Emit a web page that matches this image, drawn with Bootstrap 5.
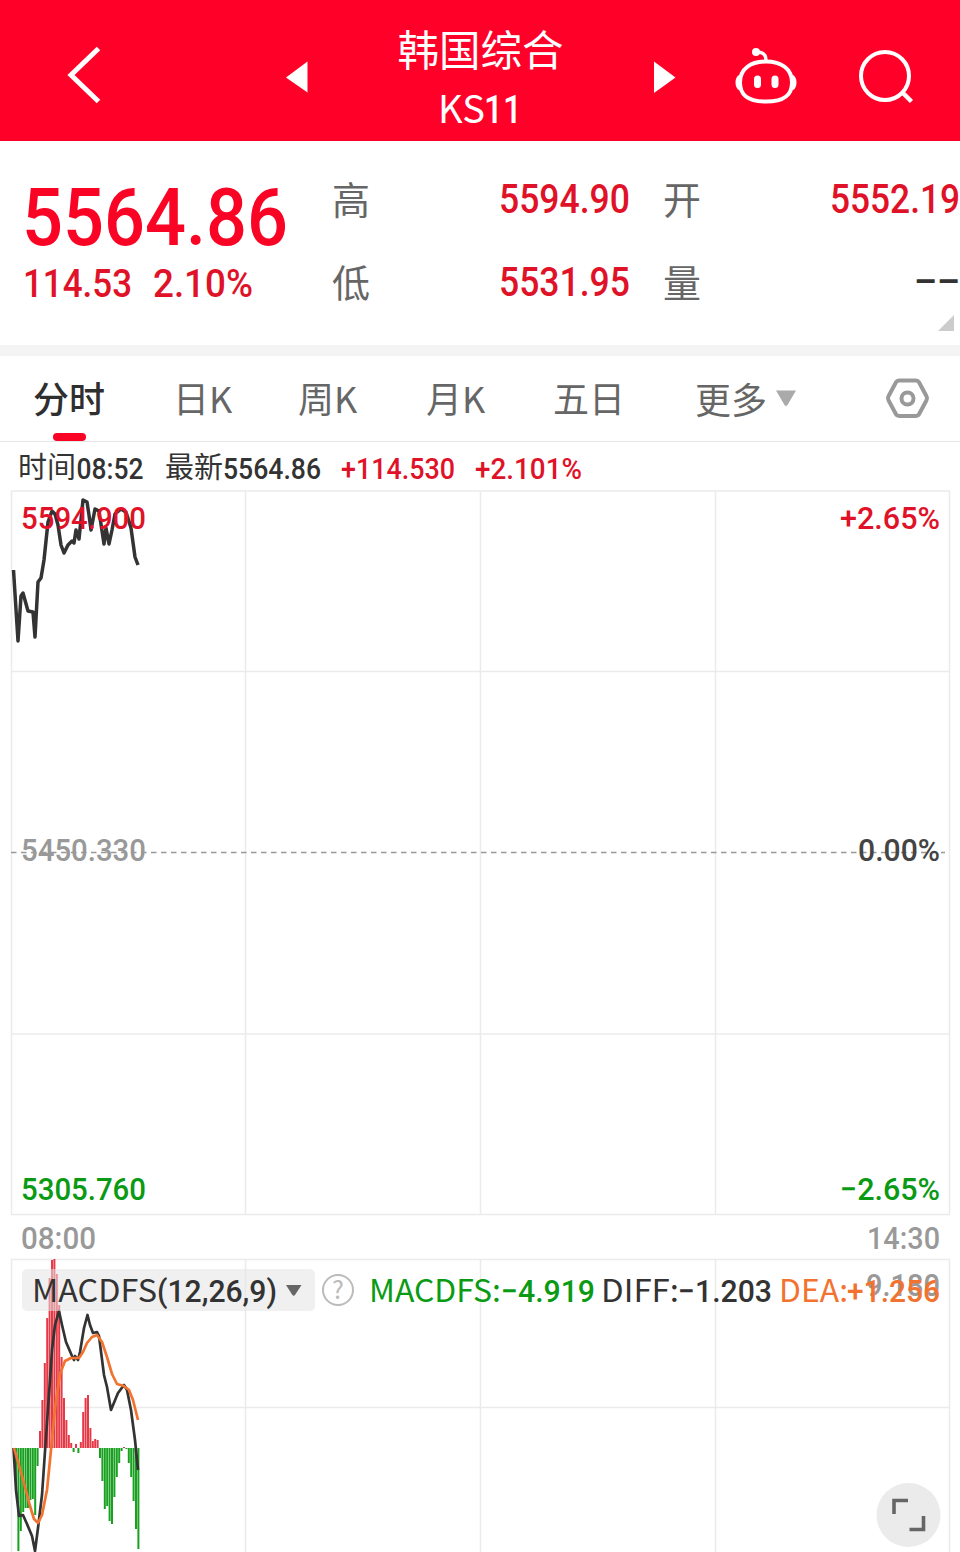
<!DOCTYPE html>
<html lang="zh-CN">
<head>
<meta charset="utf-8">
<meta name="viewport" content="width=device-width, initial-scale=1">
<title>韩国综合 KS11</title>
<link rel="stylesheet" href="https://cdn.jsdelivr.net/npm/bootstrap@5.3.0/dist/css/bootstrap.min.css">
<style>
body{width:960px;height:1552px;overflow:hidden;background:#fff;color:#333;font-family:"Noto Sans CJK SC",sans-serif}
svg{display:block;flex:none;overflow:visible}
.topbar{height:141px;background:#ff0029;color:#fff}
.stock-title{width:345px;line-height:58px;font-size:41.5px;padding-top:19px}
.stock-code{font-size:38px;line-height:60px}
.quote{height:204px;padding:15px 0 0 23px}
.price-col{width:309px;padding-top:20px}
.fig{font-family:Roboto,sans-serif;font-weight:460;white-space:nowrap}
.price .fig{font-weight:540}
.stats{display:grid;grid-template-columns:297px 297px;column-gap:34px;grid-auto-rows:83px;font-size:38px;color:#666}
.divider{height:11px;background:#f4f4f4}
.tabs{height:86px;border-bottom:1px solid #e6e6e6;padding-left:33px;font-size:36px;line-height:83px;color:#666}
.tab-on{color:#2f2f2f;font-weight:500}
.tab-on::after{content:"";position:absolute;left:20px;bottom:0;width:33px;height:8px;border-radius:4px;background:#f90424}
.info{height:48px}
</style>
</head>
<body>
<header class="topbar d-flex">
  <svg width="308" height="141" fill="none"><path d="M98.500 48.500 71 75l27.500 26.500" stroke="#fff" stroke-width="5"/><path d="M286 77.500 307.500 61.500v31z" fill="#fff"/></svg>
  <div class="stock-title text-center">韩国综合<div class="stock-code"><svg class="mx-auto" width="84" height="60"><text x="-1" y="46" fill="#fff" font-size="38" textLength="47" lengthAdjust="spacingAndGlyphs">KS</text><text x="45" y="46" fill="#fff" class="fig" font-size="39" textLength="38" lengthAdjust="spacingAndGlyphs">11</text></svg></div></div>
  <svg width="307" height="141" viewBox="653 0 307 141" fill="none" stroke="#fff">
    <path d="M654 61.500 675.500 77.500 654 93z" fill="#fff" stroke="none"/>
    <path d="M766 61.500c-15 0-26 7-26 21 0 12 7 19 26 19s26-7 26-19c0-14-11-21-26-21z" stroke-width="4"/>
    <path d="M766 61c0-6-2-9-9-9" stroke-width="3.500"/>
    <circle cx="756" cy="52" r="4" fill="#fff" stroke="none"/>
    <path d="M740 76c-4 2-4 11 0 13M792 76c4 2 4 11 0 13" stroke-width="3" fill="#fff"/>
    <path d="M757.500 79v5.500M775 79v5.500" stroke-width="7" stroke-linecap="round"/>
    <circle cx="885" cy="76" r="24" stroke-width="4"/><path d="m902 92 9.500 9.500" stroke-width="4.500"/>
  </svg>
</header>
<section class="quote d-flex position-relative">
  <div class="price-col">
    <svg class="price" width="270" height="80"><text class="fig" x="-1" y="69" font-size="80" fill="#f90424" textLength="266" lengthAdjust="spacingAndGlyphs">5564.86</text></svg>
    <svg width="270" height="54"><g class="fig" font-size="39.500" fill="#e01228"><text x="0" y="41" textLength="109" lengthAdjust="spacingAndGlyphs">114.53</text><text x="130" y="41" textLength="100" lengthAdjust="spacingAndGlyphs">2.10%</text></g></svg>
  </div>
  <div class="stats">
    <div class="d-flex align-items-center justify-content-between">高<svg width="130" height="60"><text class="fig" x="0" y="44.500" font-size="40" fill="#e01228" textLength="131" lengthAdjust="spacingAndGlyphs">5594.90</text></svg></div>
    <div class="d-flex align-items-center justify-content-between">开<svg width="130" height="60"><text class="fig" x="0" y="44.500" font-size="40" fill="#e01228" textLength="130" lengthAdjust="spacingAndGlyphs">5552.19</text></svg></div>
    <div class="d-flex align-items-center justify-content-between">低<svg width="130" height="60"><text class="fig" x="0" y="44.500" font-size="40" fill="#e01228" textLength="131" lengthAdjust="spacingAndGlyphs">5531.95</text></svg></div>
    <div class="d-flex align-items-center justify-content-between">量<svg width="46" height="60"><text class="fig" x="0" y="44" font-size="40" fill="#333" textLength="46" lengthAdjust="spacingAndGlyphs">––</text></svg></div>
  </div>
  <svg class="position-absolute end-0 bottom-0" width="22" height="30"><path d="M0 16 16 0v16z" fill="#ccc"/></svg>
</section>
<div class="divider"></div>
<nav class="tabs d-flex">
  <div class="tab-on position-relative" style="width:140px">分时</div>
  <div style="width:125px">日K</div>
  <div style="width:128px">周K</div>
  <div style="width:127px">月K</div>
  <div style="width:142px">五日</div>
  <div class="d-flex align-items-center" style="width:191px">更多<svg class="ms-2" width="22" height="20"><path d="M1 1.500h20L12.500 16q-1.500 2-3 0z" fill="#aaa"/></svg></div>
  <svg width="44" height="85" fill="none" stroke="#999" stroke-width="4"><path d="M13 24.500H30q2 0 3 1.700l7.500 14q1.200 2 0 4l-7.500 14q-1 1.800-3 1.800H13q-2 0-3-1.800l-7.500-14q-1.200-2 0-4l7.500-14q1-1.700 3-1.700z"/><circle cx="21.500" cy="42.500" r="6"/></svg>
</nav>
<div class="info">
  <svg width="960" height="48" viewBox="0 442 960 48" font-size="29" fill="#333">
    <text x="18" y="478">时间</text><text x="165" y="478">最新</text>
    <g class="fig" font-size="29.500"><text x="76.500" y="479" textLength="67" lengthAdjust="spacingAndGlyphs">08:52</text><text x="223" y="479" textLength="98" lengthAdjust="spacingAndGlyphs">5564.86</text>
    <g fill="#e01228"><text x="341" y="479" textLength="114" lengthAdjust="spacingAndGlyphs">+114.530</text><text x="475" y="479" textLength="107" lengthAdjust="spacingAndGlyphs">+2.101%</text></g></g>
  </svg>
</div>
<main class="position-relative">
<svg width="960" height="1062" viewBox="0 490 960 1062" fill="none">
  <path d="M11 491H950M11 671.500H950M11 1034H950M11 1214.500H950M11.500 491V1214.500M245.500 491V1214.500M480.500 491V1214.500M715.500 491V1214.500M949.500 491V1214.500M11 1259.500H950M11 1407.500H950M11.500 1259V1552M245.500 1259V1552M480.500 1259V1552M715.500 1259V1552M949.500 1259V1552" stroke="#ebebeb" stroke-width="1.500"/>
  <path d="M11 852.500H945" stroke="#999" stroke-width="1.500" stroke-dasharray="5.500 4.500"/>
  <polyline points="13.500,570 18,641 21,596 23,593 28,611 33,612 35,637 38,582 41,578 44,560 48,522 52,511 55,514 58,525 61,545 64,553 68,545 72,541 74,543 76,530 79,539 83,500 87,502 89,515 91,530 95,509 99,511 104,544 106,528 109,544 112,530 115,514 121,509 126,512 131,528 135,557 138,565" stroke="#333" stroke-width="3.500" stroke-linejoin="round"/>
  <g class="fig" font-size="31.500">
    <text x="21" y="528.500" fill="#e01228" textLength="125" lengthAdjust="spacingAndGlyphs">5594.900</text>
    <text x="840" y="528.500" fill="#e01228" textLength="100" lengthAdjust="spacingAndGlyphs">+2.65%</text>
    <text x="21" y="860.500" fill="#999" textLength="125" lengthAdjust="spacingAndGlyphs">5450.330</text>
    <text x="858" y="860.500" fill="#444" textLength="82" lengthAdjust="spacingAndGlyphs">0.00%</text>
    <text x="21" y="1199.500" fill="#0a9a14" textLength="125" lengthAdjust="spacingAndGlyphs">5305.760</text>
    <text x="840" y="1199.500" fill="#0a9a14" textLength="100" lengthAdjust="spacingAndGlyphs">−2.65%</text>
    <text x="21" y="1248.500" fill="#999" textLength="75" lengthAdjust="spacingAndGlyphs">08:00</text>
    <text x="867" y="1248.500" fill="#999" textLength="73" lengthAdjust="spacingAndGlyphs">14:30</text>
  </g>
  <g id="histogram"></g>
  <polyline points="13.500,1448 16,1490 19,1516 23,1515 27,1524 32,1536 35,1551 38,1528 42,1495 46,1437 50,1380 52,1350 55,1325 59,1311 62,1325 66,1342 72,1356 74,1360 75,1356 78,1360 80,1352 84,1328 87.500,1315 90,1325 93,1333 97,1332 99,1336 104,1375 107,1387 111,1410 118,1393 124,1385 127,1390 131,1410 135,1440 138,1470" stroke="#333" stroke-width="2.700" stroke-linejoin="round"/>
  <polyline points="14,1448 18,1462 24,1483 30,1506 34,1519 38,1523 42,1515 47,1490 51,1450 55,1408 60,1374 65,1361 71,1358 79,1358 83,1352 87,1343 92,1337 97,1335 102,1342 107,1357 112,1374 117,1384 124,1386 129,1390 133,1400 138,1420" stroke="#f27330" stroke-width="2.700" stroke-linejoin="round"/>
  <rect x="22" y="1269" width="293" height="42" rx="5" fill="#e4e4e4" fill-opacity=".55"/>
  <g font-size="31.500">
    <text x="32" y="1302" fill="#333" textLength="125" lengthAdjust="spacingAndGlyphs">MACDFS</text>
    <text x="369" y="1301.500" fill="#0a9a14" textLength="132" lengthAdjust="spacingAndGlyphs">MACDFS:</text>
    <text x="601" y="1301.500" fill="#333" textLength="78" lengthAdjust="spacingAndGlyphs">DIFF:</text>
    <text x="779" y="1301.500" fill="#f27330" textLength="69" lengthAdjust="spacingAndGlyphs">DEA:</text>
  </g>
  <g class="fig" font-size="31.500">
    <text x="157" y="1302" fill="#333" textLength="120" lengthAdjust="spacingAndGlyphs">(12,26,9)</text>
    <text x="501" y="1301.500" fill="#0a9a14" textLength="94" lengthAdjust="spacingAndGlyphs">−4.919</text>
    <text x="678" y="1301.500" fill="#333" textLength="94" lengthAdjust="spacingAndGlyphs">−1.203</text>
    <text x="866" y="1296" fill="#999" textLength="74" lengthAdjust="spacingAndGlyphs">9.180</text>
    <text x="847" y="1301.500" fill="#f27330" textLength="93" lengthAdjust="spacingAndGlyphs">+1.256</text>
  </g>
  <path d="M286 1285h15.500L295 1295q-1.300 1.500-2.600 0z" fill="#666"/>
  <circle cx="338" cy="1290" r="15" stroke="#bbb" stroke-width="2"/>
  <text x="338" y="1299" text-anchor="middle" fill="#bbb" font-size="25">?</text>
  <circle cx="908.500" cy="1515" r="32" fill="#ebebeb"/>
  <path d="M894 1514v-13.500h14M909.500 1529.500h14v-13.500" stroke="#666" stroke-width="3.600"/>
</svg>
</main>
<script>
// MACD bars, one per minute; heights measured from the zero line
const bars=[0,-45,-103,-83,-64,-60,-60,-52,-51,-67,-18,17,48,85,130,170,188,189,174,143,91,50,28,13,5,-4,4,-5,6,36,50,53,20,7,9,8,-10,-33,-61,-58,-73,-76,-49,-29,-15,-3,1,-1,-15,-29,-53,-81,-101];
document.getElementById('histogram').innerHTML=bars.map((v,i)=>`<rect x="${(12.6+i*2.4).toFixed(1)}" y="${v>0?1448-v:1448}" width="2" height="${Math.abs(v)}" fill="${v>0?'#e63946':'#18a020'}"/>`).join('');
</script>
<script src="https://cdn.jsdelivr.net/npm/bootstrap@5.3.0/dist/js/bootstrap.bundle.min.js"></script>
</body>
</html>
